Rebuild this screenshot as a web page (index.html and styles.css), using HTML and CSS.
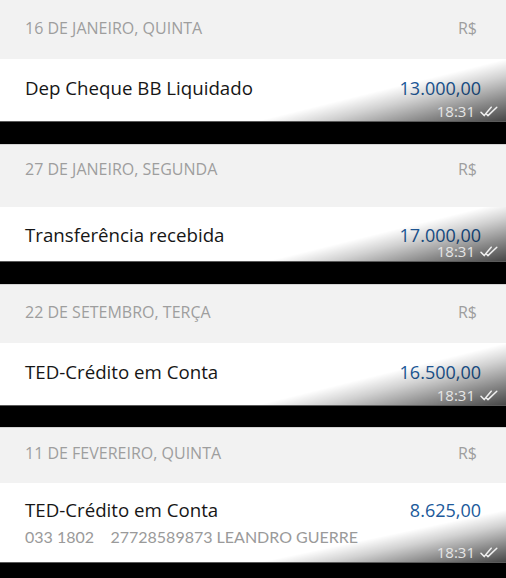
FILE: index.html
```html
<!DOCTYPE html>
<html lang="pt-BR">
<head>
<meta charset="utf-8">
<title>Extrato</title>
<link rel="stylesheet" href="styles.css">
</head>
<body>
<main class="feed">
  <section class="entry">
    <div class="day day--a"><span>16 DE JANEIRO, QUINTA</span><span>R$</span></div>
    <div class="tx tx--a">
      <div class="tx__line"><span class="tx__title">Dep Cheque BB Liquidado</span><span class="tx__amount">13.000,00</span></div>
      <div class="stamp"><span>18:31</span><svg class="ticks" viewBox="0 0 18 11" width="18" height="11"><path d="M1 6.2 L4.2 9.6 L11.2 1.2"/><path d="M6.6 8.2 L8 9.6 L16.8 1.2"/></svg></div>
    </div>
  </section>
  <div class="gap"></div>
  <section class="entry">
    <div class="day day--b"><span>27 DE JANEIRO, SEGUNDA</span><span>R$</span></div>
    <div class="tx tx--b">
      <div class="tx__line"><span class="tx__title">Transferência recebida</span><span class="tx__amount">17.000,00</span></div>
      <div class="stamp"><span>18:31</span><svg class="ticks" viewBox="0 0 18 11" width="18" height="11"><path d="M1 6.2 L4.2 9.6 L11.2 1.2"/><path d="M6.6 8.2 L8 9.6 L16.8 1.2"/></svg></div>
    </div>
  </section>
  <div class="gap"></div>
  <section class="entry">
    <div class="day day--c"><span>22 DE SETEMBRO, TERÇA</span><span>R$</span></div>
    <div class="tx tx--c">
      <div class="tx__line"><span class="tx__title">TED-Crédito em Conta</span><span class="tx__amount">16.500,00</span></div>
      <div class="stamp"><span>18:31</span><svg class="ticks" viewBox="0 0 18 11" width="18" height="11"><path d="M1 6.2 L4.2 9.6 L11.2 1.2"/><path d="M6.6 8.2 L8 9.6 L16.8 1.2"/></svg></div>
    </div>
  </section>
  <div class="gap gap--short"></div>
  <section class="entry">
    <div class="day day--d"><span>11 DE FEVEREIRO, QUINTA</span><span>R$</span></div>
    <div class="tx tx--d">
      <div class="tx__line"><span class="tx__title">TED-Crédito em Conta</span><span class="tx__amount">8.625,00</span></div>
      <div class="tx__sub">033 1802&nbsp;&nbsp;&nbsp; 27728589873 LEANDRO GUERRE</div>
      <div class="stamp"><span>18:31</span><svg class="ticks" viewBox="0 0 18 11" width="18" height="11"><path d="M1 6.2 L4.2 9.6 L11.2 1.2"/><path d="M6.6 8.2 L8 9.6 L16.8 1.2"/></svg></div>
    </div>
  </section>
  <div class="gap gap--end"></div>
</main>
</body>
</html>
```
FILE: styles.css
```css
* { box-sizing: border-box; }

html, body {
  margin: 0;
  padding: 0;
  background: #000;
}

body {
  font-family: "Open Sans", Lato, "Liberation Sans", sans-serif;
  width: 506px;
  height: 578px;
  overflow: hidden;
}

.feed {
  display: flex;
  flex-direction: column;
}

.day {
  display: flex;
  justify-content: space-between;
  align-items: flex-start;
  background: #f2f2f2;
  padding: 17px 29px 0 25px;
  font-size: 16px;
  line-height: 20px;
  color: #9e9e9e;
}

.day--a { height: 59px; padding-top: 18px; }
.day--b { height: 62px; padding-top: 14px; }
.day--c { height: 58px; padding-top: 17px; }
.day--d { height: 55px; padding-top: 15px; }

.tx {
  position: relative;
  background: #fff;
  padding: 18px 25px 0 25px;
  overflow: hidden;
}

.tx::after {
  content: "";
  position: absolute;
  inset: 0;
  background: linear-gradient(166deg, rgba(0,0,0,0) 67%, rgba(0,0,0,0.18) 76%, rgba(0,0,0,0.46) 88%, rgba(0,0,0,0.72) 100%);
  pointer-events: none;
}

.tx--a { height: 62px; padding-top: 18px; }
.tx--b { height: 54px; padding-top: 17px; }
.tx--c { height: 62px; padding-top: 18px; }
.tx--d { height: 79px; padding-top: 16px; }

.tx--d::after {
  background: linear-gradient(168deg, rgba(0,0,0,0) 72%, rgba(0,0,0,0.18) 80%, rgba(0,0,0,0.46) 90%, rgba(0,0,0,0.72) 100%);
}

.tx__line {
  display: flex;
  justify-content: space-between;
  align-items: baseline;
  font-size: 18.7px;
  line-height: 22px;
}

.tx__title {
  color: #161616;
}

.tx__amount {
  font-size: 18px;
  color: #20599a;
}

.tx__sub {
  margin-top: 6px;
  font-family: Lato, "Open Sans", sans-serif;
  font-size: 16px;
  line-height: 20px;
  color: #9a9a9a;
  white-space: nowrap;
}

.stamp {
  position: absolute;
  right: 8px;
  bottom: 2px;
  z-index: 1;
  display: flex;
  align-items: center;
  gap: 5px;
  font-size: 15px;
  line-height: 16px;
  color: #e6e6e6;
}

.ticks {
  fill: none;
  stroke: #f0f0f0;
  stroke-width: 1.5;
  stroke-linecap: round;
  stroke-linejoin: round;
}

.gap {
  height: 24px;
  background: #000;
  border-top: 1px solid #5a5a5a;
  border-bottom: 1px solid #d4d4d4;
}

.gap--short { height: 23px; }

.gap--end {
  flex: 1;
  height: 40px;
  border-bottom: none;
}
```
